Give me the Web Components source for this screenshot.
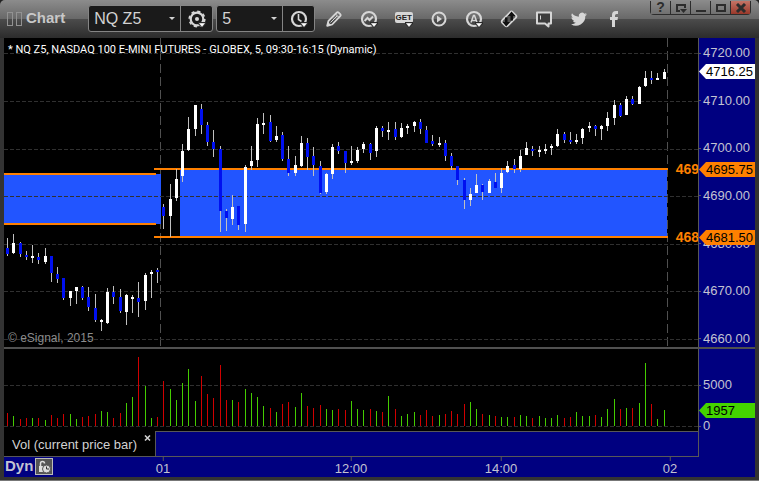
<!DOCTYPE html>
<html lang="en">
<head>
<meta charset="utf-8">
<title>Chart</title>
<style>
  html, body { height: 100%; }
  body { margin: 0; background: #222; font-family: "Liberation Sans", Arial, sans-serif; }
</style>
</head>
<body>
<chart-window></chart-window>

<script>
// Tool icons, 18x18, drawn in currentColor
const ICONS = {
  gear: `<circle cx="9" cy="9" r="6.300" fill="none" stroke="currentColor" stroke-width="2.200"/>
    <circle cx="9" cy="9" r="7.800" fill="none" stroke="currentColor" stroke-width="1.600" stroke-dasharray="3.200 2.925"/>
    <circle cx="9" cy="9" r="2" fill="currentColor"/>`,
  clock: `<circle cx="9" cy="9" r="7" fill="none" stroke="currentColor" stroke-width="2.200"/>
    <path d="M8.500 4v5.500l3 2" fill="none" stroke="currentColor" stroke-width="1.600"/>`,
  pencil: `<path d="M2.200 15.800l1.300-5L11.700 2.700q1-1 2 0l1.500 1.500q1 1 0 2L7.200 14.500z" fill="none" stroke="currentColor" stroke-width="1.800" stroke-linejoin="round"/>
    <path d="M5.500 12.500l6.500-6.500M10.500 4l3.500 3.500" stroke="currentColor"/><path d="M2 16l1-4 3 3z" fill="currentColor"/>`,
  trend: `<circle cx="9" cy="9" r="7" fill="none" stroke="currentColor" stroke-width="2.200"/>
    <path d="M4.500 11l3-3 2 2L13 6.500" fill="none" stroke="currentColor" stroke-width="2"/>`,
  play: `<circle cx="9" cy="9" r="6.500" fill="none" stroke="currentColor" stroke-width="2"/>
    <path d="M7 5.500v7l5-3.500z" fill="currentColor"/>`,
  letter: `<circle cx="9" cy="9" r="7" fill="none" stroke="currentColor" stroke-width="2.200"/>
    <path d="M6 12.500l2.500-7h1l2.500 7M7 10.500h4" fill="none" stroke="currentColor" stroke-width="1.500"/>`,
  link: `<g transform="rotate(-45 9 9)"><rect x="1.500" y="5" width="15" height="8" rx="2" fill="#555" stroke="currentColor" stroke-width="1.800"/></g>
    <path d="M5 7.500h2.500V12H10l-3.800 4.500L2.500 12H5z" fill="#111"/><path d="M11.500 1.500L15.500 6H13v4.500h-2.500V6H8z" fill="#111"/>`,
  note: `<path d="M2 2.500h14v11h-2.500v3l-3.500-3H2z" fill="#3c3c3c" stroke="currentColor" stroke-width="2" stroke-linejoin="round"/><path d="M5.500 5.500v4" stroke="currentColor"/>`,
  bird: `<path d="M17 4.200a6.500 6.500 0 0 1-1.900.5 3.300 3.300 0 0 0 1.400-1.800 6.500 6.500 0 0 1-2.100.8 3.300 3.300 0 0 0-5.600 3A9.300 9.300 0 0 1 2 3.300a3.300 3.300 0 0 0 1 4.400 3.300 3.300 0 0 1-1.500-.4 3.300 3.300 0 0 0 2.700 3.200 3.300 3.300 0 0 1-1.500.1 3.300 3.300 0 0 0 3.100 2.200A6.600 6.600 0 0 1 1 14.200 9.300 9.300 0 0 0 15.300 6a6.600 6.600 0 0 0 1.700-1.800z" fill="currentColor"/>`,
  face: `<path d="M7 17V10H5V7h2V5q0-4 4-4h2v3h-1.500Q10 4 10 5.500V7h3l-.5 3H10v7z" fill="currentColor"/>`
};

class TitleBar extends HTMLElement {
  constructor() {
    super();
    this.attachShadow({ mode: "open" });
  }

  connectedCallback() {
    this.shadowRoot.innerHTML = `
      <style>
        :host {
          display: flex;
          justify-content: space-between;
          align-items: flex-start;
          height: 38px;
          background: linear-gradient(#8c8c8c, #686868 50%, #4b4b4b 51%, #2c2c2c);
          border-radius: 5px 5px 0 0;
        }
        .tools { display: flex; align-items: center; padding-top: 5px; }
        .grip { display: flex; gap: 3px; margin-left: 7px; }
        .grip i { width: 4px; height: 12px; border: 1px solid #929292; }
        h1 { margin: 0 23px 2px 4px; font-size: 15px; line-height: 18px; color: #c8c8c8; }
        slot { display: flex; align-items: center; }
      </style>
      <div class="tools">
        <div class="grip"><i></i><i></i></div>
        <h1>Chart</h1>
        <slot></slot>
      </div>
      <window-buttons></window-buttons>
    `;
  }
}

class WindowButtons extends HTMLElement {
  constructor() {
    super();
    this.attachShadow({ mode: "open" });
  }

  connectedCallback() {
    this.shadowRoot.innerHTML = `
      <style>
        :host { display: block; margin: 1px 8px 0 0; }
        .group { display: flex; background: #2c2c2c; gap: 1px; padding: 0 1px 1px; border-radius: 0 0 4px 4px; overflow: hidden; }
        button {
          width: 19px; height: 13px; padding: 0; border: 0;
          display: flex; align-items: center; justify-content: center;
          background: linear-gradient(#8a8a8a, #707070);
          color: #2c2c2c; font: bold 14px/13px "Liberation Sans", Arial, sans-serif;
        }
        .close { background: linear-gradient(#c47466, #99382a); }
        svg { display: block; }
      </style>
      <div class="group">
        <button aria-label="Help">?</button>
        <button aria-label="Pop out"><svg width="12" height="10" fill="none" stroke="#2c2c2c"><path d="M5 8H2V2h8v3" stroke-width="2"/><path d="M5 6h7L8.500 10z" fill="#2c2c2c" stroke="none"/></svg></button>
        <button aria-label="Minimize"><svg width="12" height="10"><path d="M1 7h10v2H1z" fill="#2c2c2c"/></svg></button>
        <button aria-label="Maximize"><svg width="12" height="10"><path d="M2 2h8v6h-8z" fill="none" stroke="#2c2c2c" stroke-width="2"/></svg></button>
        <button class="close" aria-label="Close"><svg width="12" height="10"><path d="M2 1l8 8M10 1L2 9" stroke="#2c2c2c" stroke-width="3"/></svg></button>
      </div>
    `;
  }
}

class ToolButton extends HTMLElement {
  constructor() {
    super();
    this.attachShadow({ mode: "open" });
  }

  connectedCallback() {
    const icon = this.getAttribute("icon");
    const arrow = this.hasAttribute("menu");
    const caption = this.getAttribute("caption");

    this.shadowRoot.innerHTML = `
      <style>
        :host { display: block; }
        button {
          width: 35px; height: 25px; padding: 0; border: 0;
          display: flex; align-items: center; justify-content: center;
          background: none; color: #d6d6d6;
        }
        :host([boxed]) button { width: 31px; }
        .face { display: grid; align-content: center; position: relative; height: 18px; }
        .caption {
          font: bold 8px/11px "Liberation Sans", Arial, sans-serif;
          color: #222; background: #d6d6d6; border-radius: 2px; width: 18px;
          text-align: center; margin-bottom: 2px;
        }
        .arrow { position: absolute; right: 0; bottom: 0; }
      </style>
      <button aria-label="${this.getAttribute("label")}">
        <span class="face">
          ${caption ? `<span class="caption">${caption}</span>` : `<svg width="18" height="18">${ICONS[icon]}</svg>`}
          ${arrow ? `<svg class="arrow" width="8" height="6"><path d="M0 0h8v2L4 6 0 2z" fill="#2a2a2a"/><path d="M1.500 1.500h5L4 4.500z" fill="#fff" stroke="#fff" stroke-width=".6"/></svg>` : ""}
        </span>
      </button>
    `;
  }
}

class PickerBox extends HTMLElement {
  constructor() {
    super();
    this.attachShadow({ mode: "open" });
  }

  connectedCallback() {
    const value = this.getAttribute("value");

    this.shadowRoot.innerHTML = `
      <style>
        :host {
          display: flex; box-sizing: border-box; height: 27px; margin-right: 3px;
          background: #1a1a1a; border: 1px solid #858585; border-radius: 3px;
        }
        :host(:nth-of-type(2)) { margin-right: 1px; }
        label { display: flex; align-items: center; position: relative; border-right: 1px solid #858585; }
        select {
          appearance: none; width: var(--picker-width, 91px); height: 25px; padding: 0 5px;
          border: 0; background: none; color: #d2d2d2;
          font: 16px/25px "Liberation Sans", Arial, sans-serif;
        }
        svg { position: absolute; right: 4px; }
      </style>
      <label>
        <select aria-label="${this.getAttribute("label")}"><option>${value}</option></select>
        <svg width="7" height="4"><path d="M0 0h6L3 3z" fill="#d2d2d2"/></svg>
      </label>
      <slot></slot>
    `;
  }
}

// Each bar: high, body top, body bottom, low, then u(p) or d(own)
const CANDLES = `238 248 254 256 d|234 243 253 254 u|242 243 254 257 d|251 255 257 260 d|245 256 258 263 u|253 257 260 264 d|248 256 262 264 u
256 256 273 282 d|267 274 279 283 d|278 278 298 300 d|291 291 298 306 u|287 287 291 304 u|286 287 298 300 d|287 297 307 311 d|294 308 320 322 d
319 320 322 331 u|288 292 323 324 u|286 292 297 304 d|289 297 311 313 d|294 295 312 325 u|295 297 299 313 u|282 298 302 317 d|273 275 301 310 u
270 272 274 298 u|268 270 272 283 d|204 207 216 229 d|184 199 216 237 u|169 179 198 201 u|144 151 176 182 u|117 129 150 151 u|105 105 129 136 u
104 109 125 134 d|122 125 142 146 d|130 142 149 157 d|146 149 211 232 d|209 211 218 231 d|195 207 219 225 u|206 206 225 230 d|165 167 224 232 u
146 161 166 170 u|118 124 160 167 u|113 123 125 134 u|115 122 141 142 d|126 136 140 142 u|132 135 159 161 d|146 159 173 176 d|156 165 173 176 u
136 143 166 167 u|138 143 157 170 d|147 156 165 176 d|161 166 193 194 d|173 174 192 194 u|144 147 174 179 u|142 146 151 154 d|151 151 163 173 d
146 161 163 165 u|147 150 161 163 u|142 144 149 153 u|143 144 153 160 d|126 128 151 157 u|126 128 131 137 d|122 130 132 140 u|122 129 137 140 d
123 128 137 138 u|124 126 128 134 u|121 122 126 132 u|119 122 129 134 d|126 130 143 143 d|135 141 144 146 d|137 143 145 147 u|140 143 156 161 d
153 156 166 170 d|166 166 180 185 d|178 180 200 209 d|188 194 200 206 u|174 185 193 193 u|184 185 192 200 d|179 181 193 193 u|173 182 188 188 d
168 173 188 193 u|161 166 172 173 u|159 165 169 173 d|150 156 169 172 u|142 148 155 155 u|146 149 151 156 d|146 150 152 157 u|144 149 151 154 u
144 146 148 155 u|129 134 146 147 u|132 134 140 143 d|132 140 142 144 d|134 140 142 144 u|128 129 138 144 u|122 126 128 132 u|125 126 129 136 d
125 126 129 140 u|112 118 126 131 u|100 105 118 125 u|103 105 116 117 d|96 99 115 115 u|96 99 104 105 d|86 87 104 104 u|71 78 86 87 u
71 78 80 84 d|73 78 80 80 u|69 72 79 79 u`.split(/[|\n]/).map((row) => row.split(" "));

const VOLUMES = `r13 g10 r7 r8 g8 r8 g6 r11 r8 r12 g12 g7 r9 r10 r12 g15 g14 r8 r13 g23 g29 r69 g40 g8 r9 r45 g37 g26 g43 g57
g25 r50 r32 r28 r61 r26 g26 r24 g37 g33 g29 g20 r18 g14 r22 r24 g19 g33 r20 r18 r21 g17 g16 r17 r16 g25 g17 g16 r17 g15
r14 g30 r17 g10 g12 g14 r11 r16 r10 g11 r12 r15 r12 r22 g24 g17 r12 g11 r10 g9 g9 r9 g11 g10 r8 g10 g8 g8 g11 r8
r9 g14 g10 g10 r11 g9 g17 g27 r17 g18 r18 g23 g63 r22 g7 g16`.split(/\s+/);

// 25px for every four bars
const barX = (i) => Math.round(7 + 6.25 * i + (i > 64 ? 0.25 : 0));

class PricePlot extends HTMLElement {
  constructor() {
    super();
    this.attachShadow({ mode: "open" });
  }

  connectedCallback() {
    const grid = [53, 101, 149, 196, 244, 291, 339]
      .map((y) => `<path class="grid" d="M4 ${y}.5H698"/>`)
      .join("");
    const bars = CANDLES.map(([high, top, bottom, low, dir], i) => {
      const x = barX(i);
      return `<rect x="${x}" y="${high}" width="1" height="${low - high}" fill="#c0c0c0"/>
        <rect x="${x - 1}" y="${top}" width="3" height="${bottom - top}" fill="${dir === "u" ? "#fff" : "#0010f0"}"/>`;
    }).join("");

    this.shadowRoot.innerHTML = `
      <style>
        :host { display: block; position: relative; overflow: hidden; background: #000; }
        svg { position: absolute; inset: 0; width: 100%; height: 100%; shape-rendering: crispEdges; }
        .grid { stroke: #303030; stroke-dasharray: 4 2; }
        .session { stroke: #505050; stroke-dasharray: 9 4; }
        .text { position: relative; box-sizing: border-box; height: 100%; padding: 5px 4px 1px; display: flex; flex-direction: column; justify-content: space-between; }
        .name { font-family: Roboto, "Liberation Sans", sans-serif; font-size: 11px; line-height: 14px; color: #fff; }
        .copy { font-size: 12px; line-height: 16px; color: #8c8c8c; }
        .level { position: absolute; right: -1px; font-weight: bold; font-size: 14px; line-height: 16px; color: #ff8000; }
      </style>
      <svg viewBox="4 38 694 309" preserveAspectRatio="none">
        <path class="session" d="M160.500 38V347M667.500 38V347"/>
        <path d="M4 174H161V224H4zM180 169H667V237H180z" fill="#2255ff"/>
        ${grid}
        <path d="M4 173h152v2H4zM4 223h152v2H4zM154 168h514v2H154zM154 236h514v2H154z" fill="#ff8000"/>
        ${bars}
      </svg>
      <div class="text">
        <span class="name">* NQ Z5, NASDAQ 100 E-MINI FUTURES - GLOBEX, 5, 09:30-16:15 (Dynamic)</span>
        <span class="copy">© eSignal, 2015</span>
      </div>
      <span class="level" style="top: 123px">469</span>
      <span class="level" style="top: 191px">468</span>
    `;
  }
}

class VolumePlot extends HTMLElement {
  constructor() {
    super();
    this.attachShadow({ mode: "open" });
  }

  connectedCallback() {
    const bars = VOLUMES.map((bar, i) => {
      const size = Number(bar.slice(1));
      return `<rect x="${barX(i)}" y="${426 - size}" width="1" height="${size}" fill="${bar[0] === "r" ? "#d00000" : "#44cc00"}"/>`;
    }).join("");

    this.shadowRoot.innerHTML = `
      <style>
        :host { display: block; position: relative; background: #000; }
        svg { position: absolute; width: 100%; height: 100%; shape-rendering: crispEdges; }
        path { stroke: #303030; stroke-dasharray: 4 2; }
      </style>
      <svg viewBox="4 349 694 82" preserveAspectRatio="none">
        <path d="M4 385.500H698M4 426.500H698"/>
        ${bars}
      </svg>
    `;
  }
}

class ValueAxis extends HTMLElement {
  constructor() {
    super();
    this.attachShadow({ mode: "open" });
  }

  connectedCallback() {
    const labels = this.getAttribute("labels").split(" ");

    this.shadowRoot.innerHTML = `
      <style>
        :host {
          display: flex; flex-direction: column; justify-content: space-between;
          box-sizing: border-box; position: relative;
          border-left: 1px solid #585858; background: #000080;
          color: #c3c3d2; font-size: 13px; line-height: 16px;
        }
        span { display: flex; align-items: center; gap: 2px; }
        span::before { content: ""; width: 2px; height: 1px; background: #585858; }
      </style>
      ${labels.map((label) => `<span>${label}</span>`).join("")}
      <slot></slot>
    `;
  }
}

// Arrow shaped marker lying over an axis
class ValueTag extends HTMLElement {
  constructor() {
    super();
    this.attachShadow({ mode: "open" });
  }

  connectedCallback() {
    this.shadowRoot.innerHTML = `
      <style>
        :host {
          position: absolute; left: 0; right: 0; padding-left: 7px;
          clip-path: polygon(0 50%, 7px 0, 100% 0, 100% 100%, 7px 100%);
          background: var(--tag-color); color: #000;
          font-size: 13px; line-height: 15px;
        }
      </style>
      <slot></slot>
    `;
  }
}

class IndicatorStrip extends HTMLElement {
  constructor() {
    super();
    this.attachShadow({ mode: "open" });
  }

  connectedCallback() {
    this.shadowRoot.innerHTML = `
      <style>
        :host { display: flex; background: #000; border-bottom: 1px solid #585858; }
        .tab { display: flex; width: 151px; box-sizing: border-box; padding-left: 8px; justify-content: space-between; }
        .name { padding-top: 2px; color: #d2d2d2; font-size: 13px; line-height: 23px; white-space: nowrap; }
        button { width: 15px; height: 13px; padding: 0; border: 0; background: none; color: #d2d2d2; display: grid; place-items: center; }
        .rest { flex: 1; border: solid #585858; border-width: 1px 0 0 1px; background: #000080; }
      </style>
      <div class="tab">
        <span class="name">Vol (current price bar)</span>
        <button aria-label="Remove"><svg width="7" height="6"><path d="M1 .5l5 5M6 .5l-5 5" stroke="currentColor" stroke-width="1.500"/></svg></button>
      </div>
      <div class="rest"></div>
    `;
  }
}

class TimeAxis extends HTMLElement {
  constructor() {
    super();
    this.attachShadow({ mode: "open" });
  }

  connectedCallback() {
    // share of the plot's width
    const ticks = [["01", 159], ["12:00", 347], ["14:00", 497], ["02", 666]];

    this.shadowRoot.innerHTML = `
      <style>
        :host { display: flex; position: relative; height: 20px; background: #000080; color: #c3c3d2; }
        b { font-size: 15px; line-height: 18px; margin-left: 1px; }
        button { width: 18px; height: 17px; margin: 1px 0 0 2px; padding: 0; border: 1px solid #bbb; background: #555; display: grid; place-items: center; }
        .tick {
          position: absolute; top: 0; transform: translateX(-50%);
          display: grid; justify-items: center; font-size: 13px; line-height: 16px;
        }
        .tick::before { content: ""; width: 1px; height: 4px; background: #585858; }
      </style>
      <b>Dyn</b>
      <button aria-label="Lock time"><svg width="14" height="14" fill="none" stroke="#ddd"><path d="M3.500 7V3.500q0-2 2-2t2 2" stroke-width="1.500"/><path d="M2 6h6v6H2z" fill="#ddd" stroke="none"/><circle cx="9.500" cy="9" r="4" fill="#ddd" stroke="#555"/><path d="M9.500 6.500V9H12" stroke="#333"/></svg></button>
      ${ticks.map(([label, x]) => `<span class="tick" style="left: calc((100% - 57px) * ${x} / 694)">${label}</span>`).join("")}
    `;
  }
}

class ChartWindow extends HTMLElement {
  constructor() {
    super();
    this.attachShadow({ mode: "open" });
  }

  connectedCallback() {
    this.shadowRoot.innerHTML = `
      <style>
        :host {
          display: flex; flex-direction: column; height: 100%;
          background: #333; border-radius: 5px 5px 0 0;
        }
        main {
          flex: 1; display: grid; margin: 0 4px;
          grid-template-columns: 1fr 57px;
          grid-template-rows: 1fr 2px 82px 26px 20px;
          background: #000080;
        }
        hr { grid-column: 1 / -1; margin: 0; border: 0; background: #505050; }
        .prices { padding: 7px 0 0; }
        .volumes { grid-row: 3 / 5; grid-column: 2; padding: 28px 0 23px; }
        time-axis { grid-column: 1 / -1; }
        footer { height: 4px; box-sizing: border-box; border-bottom: 1px solid #777; }
      </style>
      <title-bar>
        <picker-box label="Symbol" value="NQ Z5"><tool-button boxed menu icon="gear" label="Symbol settings"></tool-button></picker-box>
        <picker-box label="Interval" value="5" style="--picker-width: 65px"><tool-button boxed menu icon="clock" label="Time template"></tool-button></picker-box>
        <tool-button icon="pencil" label="Draw"></tool-button>
        <tool-button icon="trend" menu label="Studies"></tool-button>
        <tool-button caption="GET" menu label="Advanced GET"></tool-button>
        <tool-button icon="play" label="Replay"></tool-button>
        <tool-button icon="letter" menu label="Formulas"></tool-button>
        <tool-button icon="link" label="Link"></tool-button>
        <tool-button icon="note" label="Note"></tool-button>
        <tool-button icon="bird" label="Twitter"></tool-button>
        <tool-button icon="face" label="Facebook"></tool-button>
      </title-bar>
      <main>
        <price-plot></price-plot>
        <value-axis class="prices" labels="4720.00 4710.00 4700.00 4690.00 4680.00 4670.00 4660.00">
          <value-tag style="top: 26px; --tag-color: #fff">4716.25</value-tag>
          <value-tag style="top: 124px; --tag-color: #ff8000">4695.75</value-tag>
          <value-tag style="top: 192px; --tag-color: #ff8000">4681.50</value-tag>
        </value-axis>
        <hr>
        <volume-plot></volume-plot>
        <value-axis class="volumes" labels="5000 0">
          <value-tag style="top: 54px; --tag-color: #44d400">1957</value-tag>
        </value-axis>
        <indicator-strip></indicator-strip>
        <time-axis></time-axis>
      </main>
      <footer></footer>
    `;
  }
}

customElements.define("window-buttons", WindowButtons);
customElements.define("title-bar", TitleBar);
customElements.define("tool-button", ToolButton);
customElements.define("picker-box", PickerBox);
customElements.define("price-plot", PricePlot);
customElements.define("volume-plot", VolumePlot);
customElements.define("value-axis", ValueAxis);
customElements.define("value-tag", ValueTag);
customElements.define("indicator-strip", IndicatorStrip);
customElements.define("time-axis", TimeAxis);
customElements.define("chart-window", ChartWindow);
</script>
</body>
</html>
